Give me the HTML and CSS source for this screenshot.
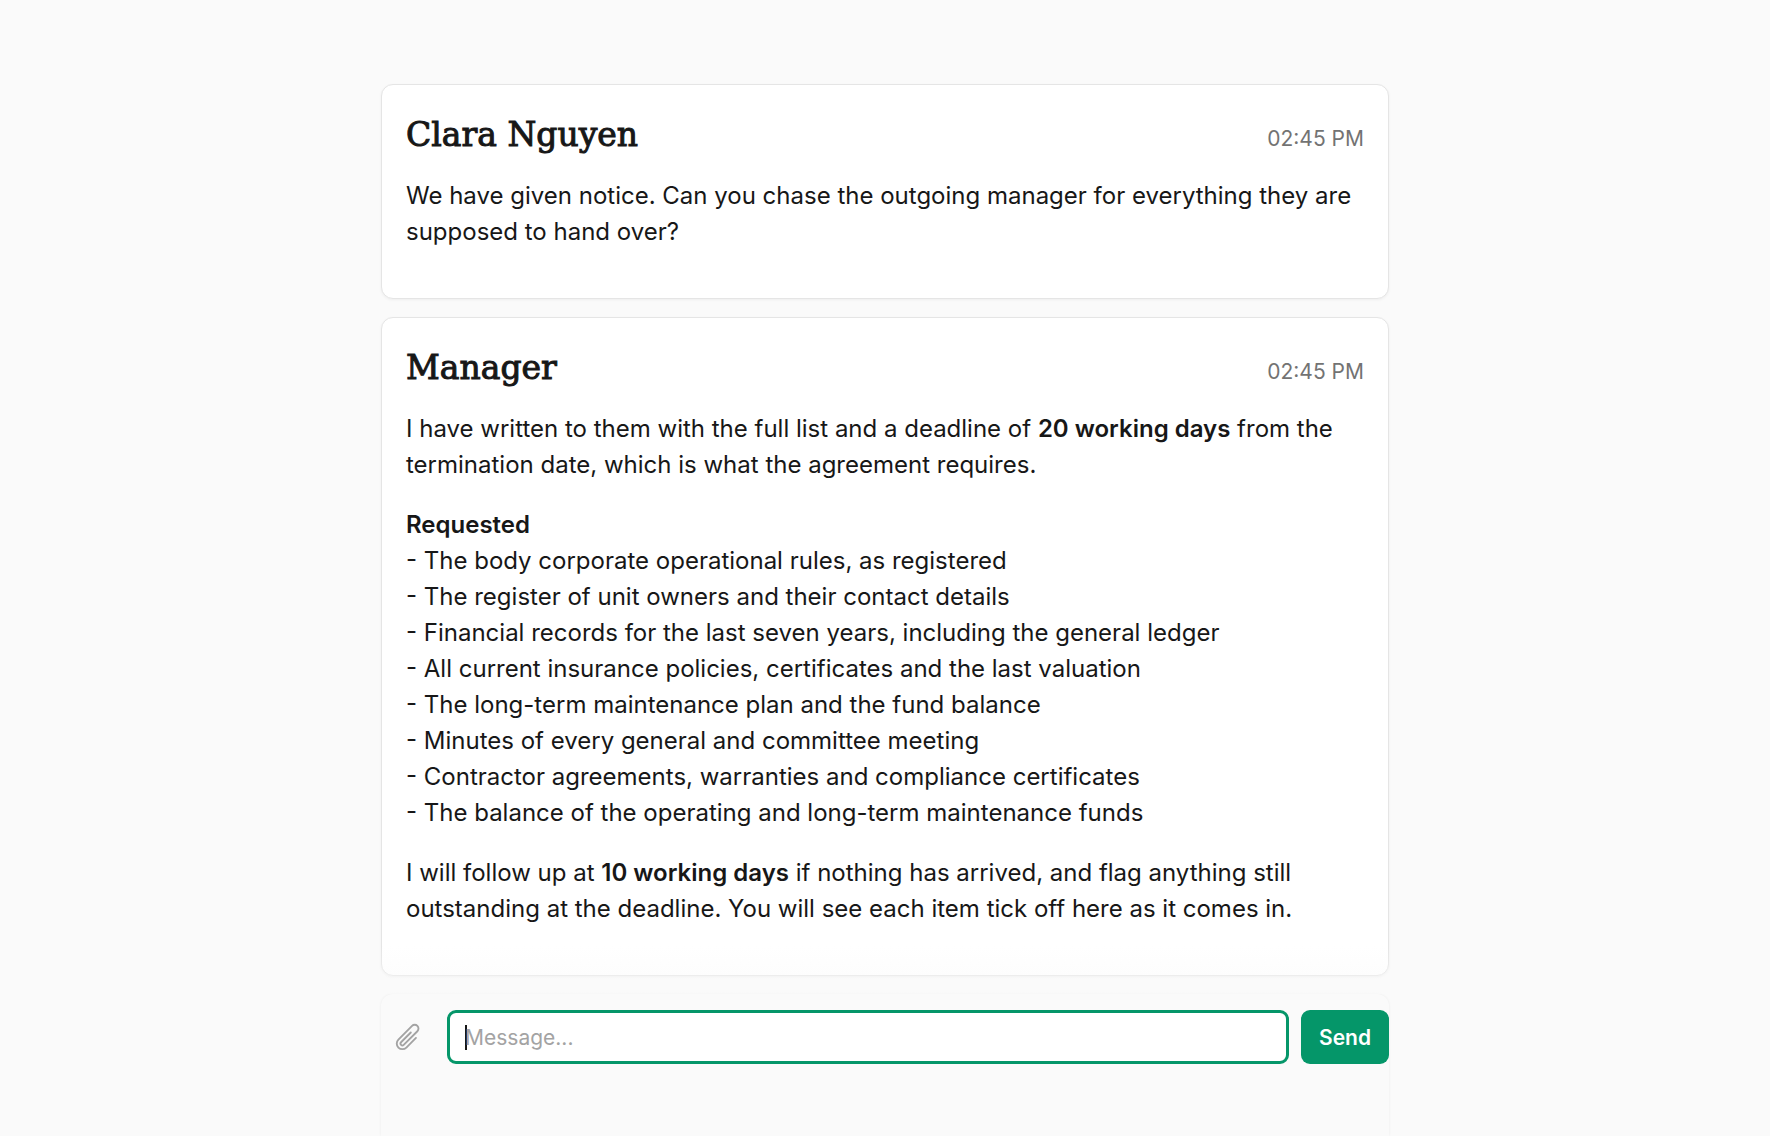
FILE: index.html
```html
<!DOCTYPE html>
<html lang="en">

<head>
    <meta charset="UTF-8">
    <meta name="viewport" content="width=device-width, initial-scale=1.0">
    <title>Messages</title>
    <link rel="stylesheet" href="styles.css">
</head>

<body>
    <main class="chat">
        <article class="message">
            <header class="message_header">
                <h2>Clara Nguyen</h2>
                <time datetime="14:45">02:45 PM</time>
            </header>
            <p>We have given notice. Can you chase the outgoing manager for everything they are supposed to hand over?</p>
        </article>

        <article class="message">
            <header class="message_header">
                <h2>Manager</h2>
                <time datetime="14:45">02:45 PM</time>
            </header>
            <p>I have written to them with the full list and a deadline of <strong>20 working days</strong> from the termination date, which is what the agreement requires.</p>
            <p>
                <strong>Requested</strong><br>
                - The body corporate operational rules, as registered<br>
                - The register of unit owners and their contact details<br>
                - Financial records for the last seven years, including the general ledger<br>
                - All current insurance policies, certificates and the last valuation<br>
                - The long-term maintenance plan and the fund balance<br>
                - Minutes of every general and committee meeting<br>
                - Contractor agreements, warranties and compliance certificates<br>
                - The balance of the operating and long-term maintenance funds
            </p>
            <p>I will follow up at <strong>10 working days</strong> if nothing has arrived, and flag anything still outstanding at the deadline. You will see each item tick off here as it comes in.</p>
        </article>

        <form class="composer">
            <button type="button" class="attach" aria-label="Attach a file">
                <svg viewBox="0 0 24 24" fill="none" stroke="currentColor" stroke-width="1.5" stroke-linecap="round" stroke-linejoin="round" aria-hidden="true">
                    <path d="m18.375 12.739-7.693 7.693a4.5 4.5 0 0 1-6.364-6.364l10.94-10.94A3 3 0 1 1 19.5 7.372L8.552 18.32m.009-.01-.01.01m5.699-9.941-7.81 7.81a1.5 1.5 0 0 0 2.112 2.13" />
                </svg>
            </button>
            <input type="text" class="message_input" placeholder="Message..." aria-label="Message" autocomplete="off" autofocus>
            <button type="submit" class="send">Send</button>
        </form>
    </main>
</body>

</html>
```

FILE: styles.css
```css
* {
    box-sizing: border-box;
}

body {
    margin: 0;
    background-color: #fafafa;
    color: #171717;
    font-family: Inter, "Liberation Sans", sans-serif;
    font-size: 24px;
    line-height: 36px;
}

.chat {
    display: flex;
    flex-direction: column;
    gap: 18px;
    width: 100%;
    max-width: 1008px;
    min-height: 100vh;
    margin: 0 auto;
    padding-top: 84px;
}

.message {
    padding: 25px 24px 48px;
    background-color: #fff;
    border: 1px solid #e5e5e5;
    border-radius: 12px;
    box-shadow: 0 1px 3px rgba(0, 0, 0, 0.05);
}

.message_header {
    display: flex;
    justify-content: space-between;
    align-items: baseline;
    margin-bottom: 18px;
}

h2 {
    margin: 0;
    font-family: "DejaVu Serif", serif;
    font-size: 33px;
    font-weight: 400;
    line-height: 50px;
    -webkit-text-stroke: 1px #171717;
}

time {
    color: #737373;
    font-size: 21px;
    line-height: 30px;
}

p {
    margin: 0;
}

p + p {
    margin-top: 24px;
}

strong {
    font-weight: 600;
}

/* message bar */
.composer {
    position: relative;
    display: flex;
    flex-grow: 1;
    align-items: flex-start;
    gap: 12px;
    padding-top: 16px;
    padding-bottom: 72px;
    border-radius: 12px 12px 0 0;
    box-shadow: 0 0 3px rgba(0, 0, 0, 0.06);
}

/* fades the last message out behind the bar */
.composer::before {
    content: "";
    position: absolute;
    right: 0;
    bottom: 100%;
    left: 0;
    height: 48px;
    background: linear-gradient(rgba(250, 250, 250, 0), rgba(250, 250, 250, 0.6));
    pointer-events: none;
}

.attach {
    width: 54px;
    height: 54px;
    padding: 12px;
    border: none;
    background: none;
    color: #a3a3a3;
    cursor: pointer;
}

.attach svg {
    display: block;
    width: 30px;
    height: 30px;
}

.message_input {
    flex: 1;
    min-width: 0;
    height: 54px;
    padding: 0 15px;
    border: 3px solid #059669;
    border-radius: 9px;
    outline: none;
    background-color: #fff;
    color: #171717;
    font-family: inherit;
    font-size: 21px;
}

.message_input::placeholder {
    color: #a3a3a3;
}

/* steady, thicker caret while the box is empty */
.message_input:focus:placeholder-shown {
    caret-color: transparent;
    background-image: linear-gradient(#171717, #171717);
    background-position: 15px center;
    background-repeat: no-repeat;
    background-size: 2px 25px;
}

.send {
    height: 54px;
    padding: 0 18px;
    border: none;
    border-radius: 9px;
    background-color: #059669;
    color: #fff;
    font-family: inherit;
    font-size: 21px;
    font-weight: 600;
    cursor: pointer;
}

.send:hover {
    background-color: #047857;
}
```
